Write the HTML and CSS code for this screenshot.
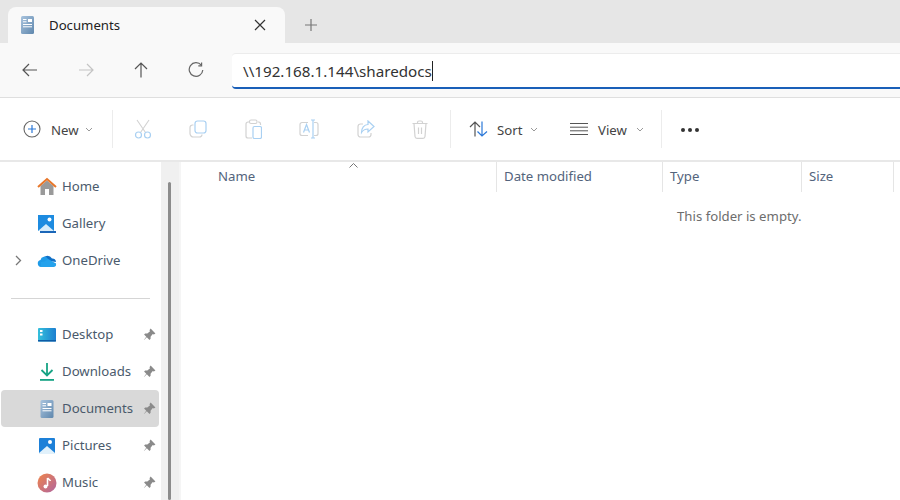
FILE: index.html
```html
<!DOCTYPE html>
<html lang="en">
<head>
<meta charset="utf-8">
<title>Documents</title>
<link rel="stylesheet" href="styles.css">
</head>
<body>
<div class="app">
  <header class="tabstrip">
    <div class="tab">
      <svg class="tab-icon" width="16" height="20" viewBox="0 0 16 20"><defs><linearGradient id="docg" x1="0" y1="0" x2="1" y2="1"><stop offset="0" stop-color="#a9c4de"/><stop offset="1" stop-color="#5f87ad"/></linearGradient></defs><rect x="1" y="1" width="13" height="18" rx="1.5" fill="url(#docg)"/><rect x="8" y="4" width="4" height="3" fill="#fff"/><path d="M3 4.500h3.500M3 6.800h3.500M3 9.500h9M3 11.800h9" stroke="#fff" stroke-width="1"/></svg>
      <span class="tab-title">Documents</span>
      <svg class="tab-close" width="12" height="12" viewBox="0 0 12 12"><path d="M1 1l10 10M11 1L1 11" stroke="#333" stroke-width="1.200" fill="none"/></svg>
    </div>
    <svg class="tab-new" width="12" height="12" viewBox="0 0 12 12"><path d="M6 0v12M0 6h12" stroke="#777" stroke-width="1.200"/></svg>
  </header>

  <nav class="navbar">
    <div class="nav-btns">
      <svg width="16" height="14" viewBox="0 0 16 14"><path d="M15 7H1M7 1L1 7l6 6" stroke="#555" stroke-width="1.200" fill="none"/></svg>
      <svg width="16" height="14" viewBox="0 0 16 14"><path d="M1 7h14M9 1l6 6-6 6" stroke="#c4c4c4" stroke-width="1.200" fill="none"/></svg>
      <svg width="14" height="16" viewBox="0 0 14 16"><path d="M7 15.500V1M1 7l6-6 6 6" stroke="#555" stroke-width="1.200" fill="none"/></svg>
      <svg width="16" height="16" viewBox="0 0 16 16"><path d="M13.300 3.200A6.800 6.800 0 1 0 14.800 8" stroke="#666" stroke-width="1.200" fill="none"/><path d="M13.600 0.500v3.300h-3.300" stroke="#666" stroke-width="1.200" fill="none"/></svg>
    </div>
    <div class="address"><span class="address-text">\\192.168.1.144\sharedocs</span><span class="caret"></span></div>
  </nav>

  <div class="toolbar">
    <div class="tb-btn tb-new">
      <svg width="18" height="18" viewBox="0 0 18 18"><circle cx="9" cy="9" r="8" stroke="#666" stroke-width="1.100" fill="none"/><path d="M9 5v8M5 9h8" stroke="#2b78d8" stroke-width="1.200"/></svg>
      <span class="tb-label">New</span>
      <svg class="chev" width="8" height="5" viewBox="0 0 8 5"><path d="M1 1l3 3 3-3" stroke="#999" stroke-width="1" fill="none"/></svg>
    </div>
    <span class="sep sep-new"></span>
    <div class="tb-disabled">
      <svg width="18" height="20" viewBox="0 0 18 20"><path d="M3 1l8.500 12.500M15 1L6.500 13.500" stroke="#d2d2d2" stroke-width="1.100" fill="none"/><circle cx="4.500" cy="16" r="3" stroke="#a9d0f2" stroke-width="1.200" fill="none"/><circle cx="13.500" cy="16" r="3" stroke="#a9d0f2" stroke-width="1.200" fill="none"/></svg>
      <svg width="18" height="18" viewBox="0 0 18 18"><path d="M4.500 5H3.500A2.500 2.500 0 0 0 1 7.500v6A3.500 3.500 0 0 0 4.500 17h6a2.500 2.500 0 0 0 2.500-2.500" stroke="#d2d2d2" stroke-width="1.200" fill="none"/><rect x="6" y="1" width="11" height="12" rx="2.500" stroke="#a9d0f2" stroke-width="1.200" fill="none"/></svg>
      <svg width="17" height="20" viewBox="0 0 17 20"><path d="M5 3H3a2 2 0 0 0-2 2v12a2 2 0 0 0 2 2h4M13 3h1a2 2 0 0 1 1.500 2v1" stroke="#d2d2d2" stroke-width="1.200" fill="none"/><rect x="4.500" y="1" width="7.500" height="3.500" rx="1.500" stroke="#d2d2d2" stroke-width="1.100" fill="none"/><rect x="8" y="7.500" width="8.500" height="12" rx="1.500" stroke="#a9d0f2" stroke-width="1.200" fill="none"/></svg>
      <svg width="20" height="20" viewBox="0 0 20 20"><path d="M9 3.500H3a2 2 0 0 0-2 2v9a2 2 0 0 0 2 2h6M15 3.500h2a2 2 0 0 1 2 2v9a2 2 0 0 1-2 2h-2" stroke="#d2d2d2" stroke-width="1.200" fill="none"/><path d="M4.500 13.500l3-8 3 8M5.500 11h4M12 1h4M12 19h4M14 1v18" stroke="#a9d0f2" stroke-width="1.200" fill="none"/></svg>
      <svg width="18" height="18" viewBox="0 0 18 18"><path d="M6 4H3.500A2.500 2.500 0 0 0 1 6.500v8A2.500 2.500 0 0 0 3.500 17h8a2.500 2.500 0 0 0 2.500-2.500V13" stroke="#d2d2d2" stroke-width="1.200" fill="none"/><path d="M11 1l6 5.500L11 12V9C8 9 6 10 4.500 12.500 4.500 8 7 4.500 11 4.500z" stroke="#a9d0f2" stroke-width="1.200" fill="none"/></svg>
      <svg width="16" height="19" viewBox="0 0 16 19"><path d="M0.500 3.500h15M5.500 3.500V2.500a1.500 1.500 0 0 1 1.500-1.500h2a1.500 1.500 0 0 1 1.500 1.500v1M2 3.500l1 13a2 2 0 0 0 2 1.800h6a2 2 0 0 0 2-1.800l1-13M6.500 7.500v6.500M9.500 7.500v6.500" stroke="#d2d2d2" stroke-width="1.200" fill="none"/></svg>
    </div>
    <span class="sep sep-sort"></span>
    <div class="tb-btn tb-sort">
      <svg width="19" height="16" viewBox="0 0 19 16"><path d="M6 15.500V1M1 6l5-5 5 5" stroke="#555" stroke-width="1.200" fill="none"/><path d="M13 .5V15M8.500 10.500L13 15l5-4.500" stroke="#2b78d8" stroke-width="1.200" fill="none"/></svg>
      <span class="tb-label">Sort</span>
      <svg class="chev" width="8" height="5" viewBox="0 0 8 5"><path d="M1 1l3 3 3-3" stroke="#999" stroke-width="1" fill="none"/></svg>
    </div>
    <div class="tb-btn tb-view">
      <svg width="18" height="12" viewBox="0 0 18 12"><path d="M0 .5h18M0 4.200h18M0 7.800h18M0 11.500h18" stroke="#555" stroke-width="1"/></svg>
      <span class="tb-label">View</span>
      <svg class="chev" width="8" height="5" viewBox="0 0 8 5"><path d="M1 1l3 3 3-3" stroke="#999" stroke-width="1" fill="none"/></svg>
    </div>
    <span class="sep sep-more"></span>
    <div class="more"><i></i><i></i><i></i></div>
  </div>

  <main class="main">
    <aside class="sidebar">
      <div class="row">
        <svg class="ico" width="20" height="20" viewBox="0 0 20 20"><path d="M3.500 9v9h4.500v-6h4v6h4.500V9L10 3.500z" fill="#9a9a9a"/><path d="M1 10l9-8 9 8" stroke="#e8772a" stroke-width="2" fill="none"/></svg>
        <span class="name">Home</span>
      </div>
      <div class="row">
        <svg class="ico" width="20" height="20" viewBox="0 0 20 20"><path d="M3 4v15h16v-2H5V4z" fill="#1b66b8"/><rect x="1" y="1" width="16" height="16" fill="#1d8be0"/><path d="M1 17l8-7 8 7z" fill="#d6ecfb"/><circle cx="12.500" cy="5.500" r="2" fill="#fff"/></svg>
        <span class="name">Gallery</span>
      </div>
      <div class="row">
        <svg class="chevron" width="7" height="11" viewBox="0 0 7 11"><path d="M1 1l4.500 4.500L1 10" stroke="#777" stroke-width="1.300" fill="none"/></svg>
        <svg class="ico" width="20" height="20" viewBox="0 0 20 20"><path d="M5 9a5.500 5.500 0 0 1 10-1.500A3.500 3.500 0 0 1 19 11z" fill="#0f6fc6"/><path d="M4 16a3.500 3.500 0 0 1-.5-6.900A4 4 0 0 1 11 8l5 3 3 1.500A3 3 0 0 1 16.500 16z" fill="#1f9be8"/><path d="M4 16h12.500a3 3 0 0 0 2.500-3.500L11 8 7.500 10.500 4 11z" fill="#2aa7ef" opacity=".6"/></svg>
        <span class="name">OneDrive</span>
      </div>
      <hr class="divider">
      <div class="row pinned">
        <svg class="ico" width="20" height="20" viewBox="0 0 20 20"><defs><linearGradient id="desk" x1="0" y1="0" x2="1" y2="0"><stop offset="0" stop-color="#35c0dc"/><stop offset="1" stop-color="#1c7fd0"/></linearGradient></defs><rect x="1" y="3" width="18" height="13.500" rx="1" fill="url(#desk)"/><rect x="3" y="5" width="2.500" height="2" fill="#fff"/><rect x="3" y="8.500" width="2.500" height="2" fill="#fff"/><rect x="1" y="15" width="18" height="1.500" fill="#0d5ca6"/></svg>
        <span class="name">Desktop</span>
        <svg class="pin" width="13" height="13" viewBox="0 0 12 12"><path d="M7 .5l4.500 4.500-1.500 1-1-.5L7 8v2L6 11 3.500 8.500 1 11 .8 11 3 8 1 6l1-1h2l2.500-2L6 2z" fill="#8a8a8a"/></svg>
      </div>
      <div class="row pinned">
        <svg class="ico" width="20" height="20" viewBox="0 0 20 20"><path d="M10 1v12M4.500 8L10 13.500 15.500 8" stroke="#17a384" stroke-width="1.800" fill="none"/><rect x="3" y="17" width="14" height="1.800" fill="#17a384"/></svg>
        <span class="name">Downloads</span>
        <svg class="pin" width="13" height="13" viewBox="0 0 12 12"><path d="M7 .5l4.500 4.500-1.500 1-1-.5L7 8v2L6 11 3.500 8.500 1 11 .8 11 3 8 1 6l1-1h2l2.500-2L6 2z" fill="#8a8a8a"/></svg>
      </div>
      <div class="row pinned selected">
        <svg class="ico" width="20" height="20" viewBox="0 0 20 20"><rect x="3.500" y="1" width="13" height="18" rx="1.500" fill="url(#docg)"/><rect x="10.500" y="4" width="4" height="3" fill="#fff"/><path d="M5.500 4.500H9M5.500 6.800H9M5.500 9.500h9M5.500 11.800h9" stroke="#fff" stroke-width="1"/></svg>
        <span class="name">Documents</span>
        <svg class="pin" width="13" height="13" viewBox="0 0 12 12"><path d="M7 .5l4.500 4.500-1.500 1-1-.5L7 8v2L6 11 3.500 8.500 1 11 .8 11 3 8 1 6l1-1h2l2.500-2L6 2z" fill="#8a8a8a"/></svg>
      </div>
      <div class="row pinned">
        <svg class="ico" width="20" height="20" viewBox="0 0 20 20"><rect x="2" y="2" width="16" height="16" rx="1" fill="#1d80d8"/><path d="M2 17l8-7 8 7v1H2z" fill="#e1f1fb"/><circle cx="13" cy="6" r="2" fill="#fff"/></svg>
        <span class="name">Pictures</span>
        <svg class="pin" width="13" height="13" viewBox="0 0 12 12"><path d="M7 .5l4.500 4.500-1.500 1-1-.5L7 8v2L6 11 3.500 8.500 1 11 .8 11 3 8 1 6l1-1h2l2.500-2L6 2z" fill="#8a8a8a"/></svg>
      </div>
      <div class="row pinned">
        <svg class="ico" width="20" height="20" viewBox="0 0 20 20"><defs><linearGradient id="mus" x1="0" y1="0" x2="1" y2="1"><stop offset="0" stop-color="#f0854a"/><stop offset="1" stop-color="#b0659f"/></linearGradient></defs><circle cx="10" cy="10" r="9.500" fill="url(#mus)"/><path d="M10.500 5v8" stroke="#fff" stroke-width="1.600"/><path d="M10.500 5c1 1.500 2.500 1.500 3 3" stroke="#fff" stroke-width="1.400" fill="none"/><circle cx="8.500" cy="13.500" r="2" fill="#fff"/></svg>
        <span class="name">Music</span>
        <svg class="pin" width="13" height="13" viewBox="0 0 12 12"><path d="M7 .5l4.500 4.500-1.500 1-1-.5L7 8v2L6 11 3.500 8.500 1 11 .8 11 3 8 1 6l1-1h2l2.500-2L6 2z" fill="#8a8a8a"/></svg>
      </div>
    </aside>
    <div class="scrollbar"><div class="thumb"></div></div>
    <section class="content">
      <div class="cols">
        <div class="col col-name">Name<svg class="sort-caret" width="9" height="5" viewBox="0 0 9 5"><path d="M.5 4.500l4-4 4 4" stroke="#777" stroke-width="1" fill="none"/></svg></div>
        <div class="col col-date">Date modified</div>
        <div class="col col-type">Type</div>
        <div class="col col-size">Size</div>
      </div>
      <p class="empty">This folder is empty.</p>
    </section>
  </main>
</div>
</body>
</html>
```
FILE: styles.css
```css
* { box-sizing: border-box; }
html, body { margin: 0; padding: 0; }
body { font-family: "Noto Sans", "Open Sans", sans-serif; background: #fff; color: #333; }
.app { width: 900px; height: 500px; overflow: hidden; display: flex; flex-direction: column; }

.tabstrip { height: 43px; flex: none; background: #e6e6e6; padding: 7px 0 0 8px; display: flex; align-items: flex-start; }
.tab { width: 277px; height: 36px; background: #f9f9f9; border-radius: 8px 8px 0 0; display: flex; align-items: center; padding: 0 19px 0 12px; }
.tab-icon { flex: none; }
.tab-title { font-size: 13.200px; color: #222; margin-left: 13px; flex: 1; }
.tab-new { margin: 12px 0 0 20px; }

.navbar { height: 55px; flex: none; background: #f9f9f9; border-bottom: 1px solid #dfdfdf; display: flex; align-items: flex-start; padding-top: 10px; }
.nav-btns { width: 232px; flex: none; height: 36px; display: flex; align-items: center; gap: 40px; padding: 0 0 2px 22px; }
.address { flex: 1; height: 36px; background: #fff; border-top: 1px solid #ececec; border-bottom: 2px solid #1a5fb8; border-radius: 4px 0 0 4px; padding-left: 11px; display: flex; align-items: center; }
.address-text { font-size: 15.200px; color: #333; }
.caret { width: 1px; height: 20px; background: #222; }

.toolbar { height: 64px; flex: none; background: #fff; border-bottom: 2px solid #e8e8e8; display: flex; align-items: center; }
.tb-btn { display: flex; align-items: center; }
.tb-label { font-size: 13.200px; color: #444; padding-top: 2px; }
.tb-new { padding-left: 23px; gap: 10px; width: 112px; }
.tb-new .chev { margin-left: -4px; }
.sep { width: 1px; height: 38px; background: #ececec; flex: none; }
.tb-disabled { display: flex; align-items: center; justify-content: space-between; width: 337px; padding: 0 22px 0 21px; }
.tb-sort { gap: 9px; padding-left: 18px; width: 119px; }
.tb-sort .chev { margin-left: -1px; }
.tb-view { gap: 10px; width: 91px; }
.tb-view .chev { margin-left: -1px; }
.more { display: flex; gap: 3px; margin: 2px 0 0 19px; }
.more i { width: 4px; height: 4px; border-radius: 50%; background: #333; display: block; }

.main { flex: 1; display: flex; min-height: 0; }
.sidebar { width: 161px; flex: none; padding: 6px 2px 0 1px; display: flex; flex-direction: column; }
.row { height: 37px; flex: none; position: relative; display: flex; align-items: center; padding-left: 36px; border-radius: 4px; }
.row.selected { background: #d9d9d9; }
.ico { flex: none; }
.name { font-size: 13.200px; color: #4a5a6c; margin-left: 5px; flex: 1; padding-bottom: 2px; }
.chevron { position: absolute; left: 14px; top: 13px; }
.pin { flex: none; margin-right: 3px; }
.divider { width: 139px; height: 1px; border: 0; background: #d5d5d5; margin: 19px 0 17px 10px; flex: none; }
.scrollbar { width: 18px; flex: none; background: #f0f0f0; padding: 20px 0 0 7px; }
.thumb { width: 3px; height: 100%; background: #8c8c8c; border-radius: 2px; }
.content { flex: 1; position: relative; border-left: 2px solid #f5f5f5; }
.cols { height: 30px; display: flex; font-size: 13.200px; color: #53647c; }
.col { height: 30px; line-height: 29px; border-right: 1px solid #e5e5e5; padding-left: 7px; position: relative; }
.col-name { width: 316px; padding-left: 37px; }
.col-date { width: 166px; }
.col-type { width: 139px; }
.col-size { width: 92px; }
.sort-caret { position: absolute; left: 168px; top: 1px; }
.empty { margin: 13px 0 0; font-size: 13.200px; color: #6d6d6d; padding-left: 496px; line-height: 22px; }
```
